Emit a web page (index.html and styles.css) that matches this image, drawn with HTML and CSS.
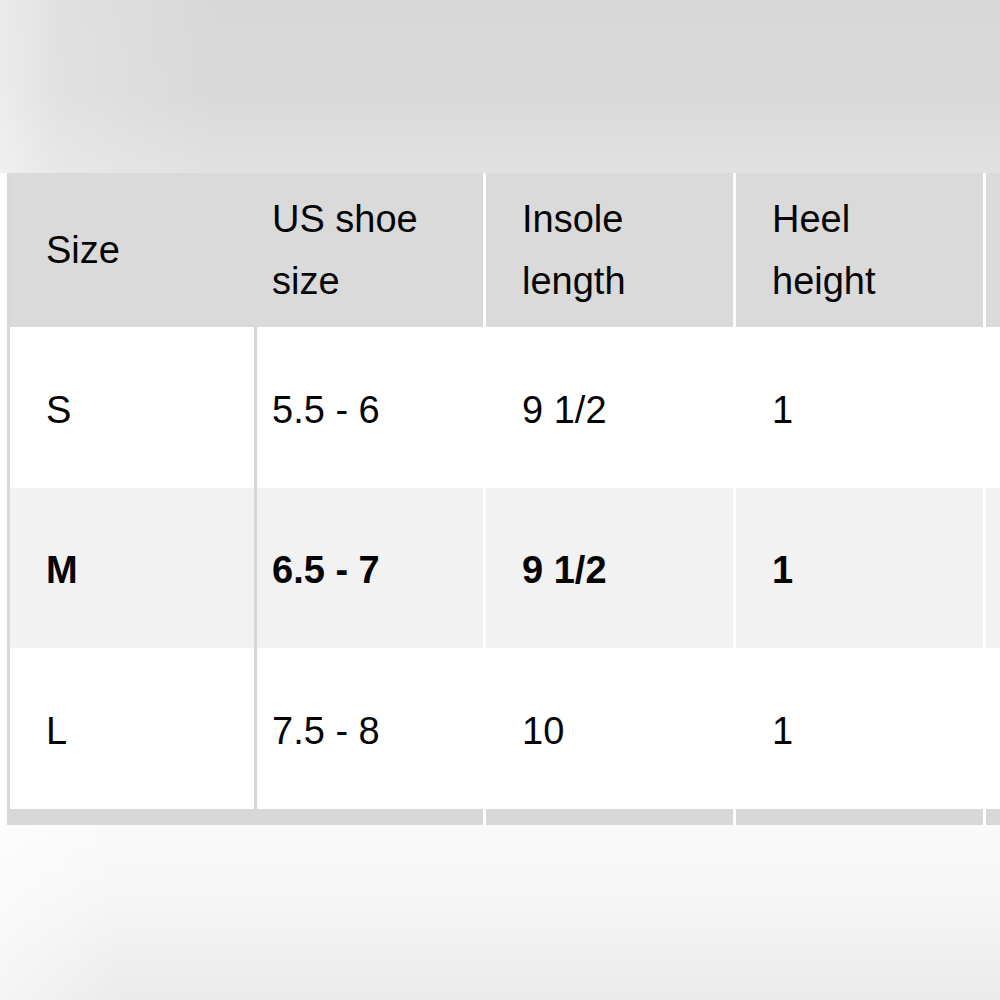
FILE: index.html
```html
<!DOCTYPE html>
<html>
<head>
<meta charset="utf-8">
<link rel="stylesheet" href="styles.css">
</head>
<body>
<div class="page">
  <div class="backdrop-top"></div>
  <div class="chart">
    <div class="row head">
      <div class="cell c1">Size</div>
      <div class="cell c2">US shoe<br>size</div>
      <div class="cell c3">Insole<br>length</div>
      <div class="cell c4">Heel<br>height</div>
      <div class="cell c5"></div>
    </div>
    <div class="row body">
      <div class="cell c1">S</div>
      <div class="cell c2">5.5 - 6</div>
      <div class="cell c3">9 1/2</div>
      <div class="cell c4">1</div>
      <div class="cell c5"></div>
    </div>
    <div class="row body alt selected">
      <div class="cell c1">M</div>
      <div class="cell c2">6.5 - 7</div>
      <div class="cell c3">9 1/2</div>
      <div class="cell c4">1</div>
      <div class="cell c5"></div>
    </div>
    <div class="row body">
      <div class="cell c1">L</div>
      <div class="cell c2">7.5 - 8</div>
      <div class="cell c3">10</div>
      <div class="cell c4">1</div>
      <div class="cell c5"></div>
    </div>
    <div class="row foot">
      <div class="cell c1"></div>
      <div class="cell c2"></div>
      <div class="cell c3"></div>
      <div class="cell c4"></div>
      <div class="cell c5"></div>
    </div>
  </div>
  <div class="backdrop-bottom"></div>
</div>
</body>
</html>
```
FILE: styles.css
```css
html, body {
  margin: 0;
  padding: 0;
  background: #ffffff;
}
.page {
  width: 1000px;
  height: 1000px;
  overflow: hidden;
  display: flex;
  flex-direction: column;
  font-family: "Liberation Sans", Arial, Helvetica, sans-serif;
  color: #050505;
}
.backdrop-top {
  height: 173px;
  flex: none;
  background:
    linear-gradient(to right, rgba(255,255,255,0.5) 0, rgba(255,255,255,0.22) 60px, rgba(255,255,255,0) 220px),
    linear-gradient(to bottom, #d8d8d8 0, #d9d9d9 55%, #e1e1e1 100%);
}
.backdrop-bottom {
  flex: 1;
  background:
    linear-gradient(to right, rgba(255,255,255,0.5) 0, rgba(255,255,255,0) 120px),
    linear-gradient(to bottom, #fafafa 0, #f6f6f6 40%, #ebebeb 100%);
}
.chart {
  flex: none;
  margin-left: 7px;
  border-left: 3px solid #d8d8d8;
  width: 1300px;
  background: #ffffff;
}
.row {
  display: flex;
}
.cell {
  box-sizing: border-box;
  flex: none;
  font-size: 38px;
  display: flex;
  align-items: center;
  padding-left: 36px;
}
.c1 { width: 247px; }
.c2 { width: 226px; padding-left: 15px; }
.c3, .c4, .c5 {
  width: 250px;
  border-left: 3px solid #ffffff;
}
.head {
  height: 154px;
  line-height: 62px;
}
.head .cell {
  background: #dadada;
}
.body {
  height: 161px;
}
.body .cell {
  padding-top: 5px;
}
.body.alt {
  height: 160px;
}
.body .c1 {
  border-right: 3px solid #d6d6d6;
}
.alt .cell {
  background: #f2f2f2;
}
.selected .cell {
  font-weight: bold;
}
.foot {
  height: 16px;
}
.foot .cell {
  background: #d8d8d8;
}
```
